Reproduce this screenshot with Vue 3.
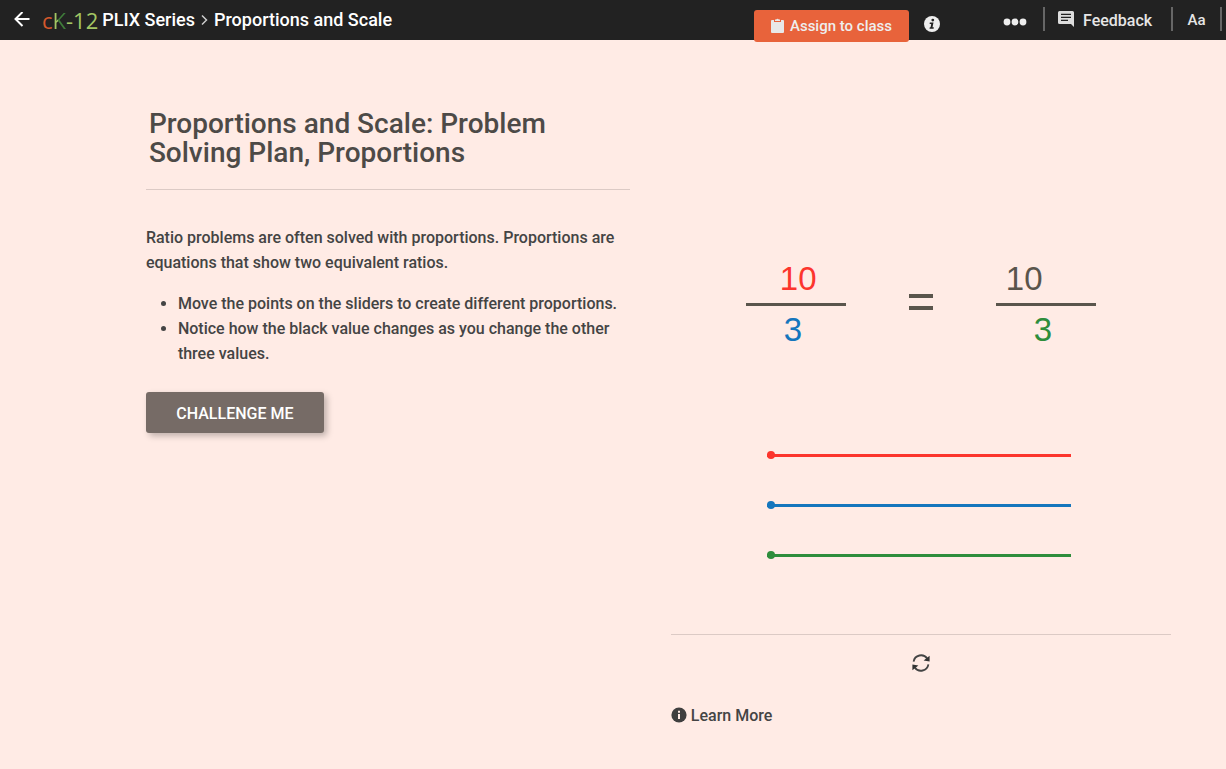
<script setup>
import { computed, ref } from 'vue';

const first = ref(10);
const second = ref(3);
const third = ref(3);

const result = computed(() => {
    const value = (first.value * third.value) / second.value;
    return Math.round(value * 100) / 100;
});

const reset = () => {
    first.value = 10;
    second.value = 3;
    third.value = 3;
};
</script>

<template>
    <div class="page">
        <header class="topbar">
            <button class="icon-btn back" aria-label="Back">
                <svg width="16" height="16" viewBox="0 0 16 16" fill="none" stroke="#fff" stroke-width="2">
                    <path d="M15.5 7H1.5M8.5 0L1.5 7l7 7" />
                </svg>
            </button>
            <a href="#" class="logo"><span class="c">c</span><span class="k">K</span>-12</a>
            <nav class="crumbs">
                <a href="#">PLIX Series</a>
                <svg width="7" height="12" viewBox="0 0 7 12" fill="none" stroke="#ccc" stroke-width="1.5">
                    <path d="M1 1.5L5.5 6 1 10.5" />
                </svg>
                <a href="#">Proportions and Scale</a>
            </nav>
            <button class="assign">
                <svg width="13" height="17" viewBox="0 0 13 17" fill="#e8e8e8">
                    <path d="M1 2h2v2h7V2h2q1 0 1 1v11q0 1-1 1H1q-1 0-1-1V3q0-1 1-1z" />
                    <path d="M4 3V1.6h1.2a1.4 1.4 0 0 1 2.6 0H9V3z" />
                </svg>
                <span>Assign to class</span>
            </button>
            <button class="icon-btn info" aria-label="Information">
                <svg width="16" height="16" viewBox="0 0 16 16">
                    <circle cx="8" cy="8" r="8" fill="#eee" />
                    <circle cx="8.8" cy="4.1" r="1.4" fill="#222" />
                    <path d="M5.8 6.6h3.7l-1 4.7h1.3l-.2 1.4H5.5l.3-1.4h.8l.6-3.3H5.6z" fill="#222" />
                </svg>
            </button>
            <button class="icon-btn more" aria-label="More options">
                <svg width="24" height="8" viewBox="0 0 24 8" fill="#eee">
                    <circle cx="4" cy="4" r="3.4" />
                    <circle cx="12" cy="4" r="3.4" />
                    <circle cx="20" cy="4" r="3.4" />
                </svg>
            </button>
            <button class="tool feedback">
                <svg width="16" height="16" viewBox="0 0 16 16">
                    <path d="M1.5 0h13Q16 0 16 1.5V16l-3-3H1.5Q0 13 0 11.5v-10Q0 0 1.5 0z" fill="#ddd" />
                    <path d="M3 3.4h10M3 6.4h10M3 9.4h7" stroke="#222" stroke-width="1.4" />
                </svg>
                <span>Feedback</span>
            </button>
            <button class="tool text-size"><span>Aa</span></button>
        </header>

        <main class="content">
            <section class="intro">
                <h1>Proportions and Scale: Problem Solving Plan, Proportions</h1>
                <p>Ratio problems are often solved with proportions. Proportions are equations that show two equivalent ratios.</p>
                <ul>
                    <li>Move the points on the sliders to create different proportions.</li>
                    <li>Notice how the black value changes as you change the other three values.</li>
                </ul>
                <button class="challenge">CHALLENGE ME</button>
            </section>

            <section class="plix">
                <div class="equation">
                    <div class="fraction">
                        <span class="red">{{ first }}</span>
                        <span class="bar"></span>
                        <span class="blue">{{ second }}</span>
                    </div>
                    <svg class="equals" width="24" height="16" viewBox="0 0 24 16" fill="#5a554c">
                        <path d="M0 0h24v4H0zM0 12h24v4H0z" />
                    </svg>
                    <div class="fraction">
                        <span class="result">{{ result }}</span>
                        <span class="bar"></span>
                        <span class="green">{{ third }}</span>
                    </div>
                </div>

                <div class="sliders">
                    <input v-model.number="first" class="red" type="range" min="10" max="40" aria-label="Left numerator">
                    <input v-model.number="second" class="blue" type="range" min="3" max="33" aria-label="Left denominator">
                    <input v-model.number="third" class="green" type="range" min="3" max="33" aria-label="Right denominator">
                </div>

                <div class="reset-row">
                    <button class="icon-btn" aria-label="Reset" @click="reset">
                        <svg width="18" height="18" viewBox="0 0 18 18">
                            <path d="M1.6 7.6a7.5 7.5 0 0 1 13.6-3M16.4 10.4a7.5 7.5 0 0 1-13.6 3" fill="none" stroke="#444" stroke-width="1.8" />
                            <path d="M17.6 1.8v5.8l-6-1.2zM.4 16.2v-5.8l6 1.2z" fill="#333" />
                        </svg>
                    </button>
                </div>

                <a href="#" class="learn">
                    <svg width="16" height="18" viewBox="0 0 16 18">
                        <circle cx="8" cy="8" r="7.6" fill="#3f3f3f" />
                        <path d="M7 3.8h2v2H7zM7 7h2v5H7z" fill="#ffebe5" />
                    </svg>
                    <span>Learn More</span>
                </a>
            </section>
        </main>
    </div>
</template>

<style>
body {
    background: #ffebe5;
}
</style>

<style scoped>
.page {
    min-height: 100vh;
    background: #ffebe5;
    color: #444;
    font-family: Roboto, sans-serif;
    font-size: 16px;
    font-weight: 500;
}

a {
    color: inherit;
    text-decoration: none;
}

button {
    border: none;
    padding: 0;
    background: none;
    color: inherit;
    font: inherit;
    cursor: pointer;
}

svg {
    display: block;
    flex: none;
}

.topbar {
    display: flex;
    align-items: center;
    height: 40px;
    padding-left: 14px;
    background: #222;
    color: #fff;
    white-space: nowrap;
}

.logo {
    margin-left: 12px;
    color: #a3c664;
    font-family: "Open Sans", sans-serif;
    font-size: 22px;
    font-weight: 400;
    line-height: 38px;
}

.logo .c {
    color: #d5582c;
}

.logo .k {
    background: linear-gradient(to right, #a3c664 5px, #3f7d3a 5px);
    background-clip: text;
    color: transparent;
}

.crumbs {
    display: flex;
    align-items: center;
    gap: 6px;
    margin-left: 4px;
    font-size: 18px;
    line-height: 40px;
}

.assign {
    display: flex;
    align-items: center;
    justify-content: center;
    gap: 6px;
    align-self: flex-start;
    flex: none;
    width: 155px;
    height: 32px;
    margin-top: 10px;
    margin-left: auto;
    border-radius: 3px;
    background: #e8633b;
    color: #eee;
    font-size: 15px;
}

.info {
    margin: 8px 0 0 15px;
}

.more {
    margin: 4px 16px 0 63px;
}

.tool {
    display: flex;
    align-items: center;
    height: 24px;
    margin-bottom: 2px;
    color: #e6e6e6;
}

.tool span {
    padding-top: 2px;
}

.feedback {
    gap: 9px;
    width: 128px;
    padding-left: 13px;
    border-left: 2px solid #666;
}

.text-size {
    justify-content: center;
    width: 51px;
    margin-right: 4px;
    border: solid #666;
    border-width: 0 2px;
    font-size: 15px;
}

.content {
    display: grid;
    grid-template-columns: 484fr 500fr;
    gap: 41px;
    padding: 0 4.5% 0 11.9%;
}

.intro {
    padding-top: 69px;
}

h1 {
    margin: 0 0 35px;
    padding: 0 3px 22px;
    border-bottom: 1px solid #dccac5;
    color: #4d4a47;
    font-size: 28px;
    font-weight: 500;
    line-height: 29px;
}

p,
ul {
    margin: 0 0 16px;
    line-height: 25px;
}

ul {
    margin-bottom: 26px;
    padding-left: 32px;
}

.challenge {
    width: 178px;
    height: 41px;
    padding-top: 2px;
    border-radius: 3px;
    background: #766b66;
    box-shadow: 3px 3px 6px rgba(0, 0, 0, 0.25);
    color: #fff;
}

.plix {
    padding-top: 215px;
}

.red {
    color: #fc352d;
}

.blue {
    color: #1576bd;
}

.green {
    color: #2e8d3c;
}

.equation {
    display: flex;
    align-items: center;
    justify-content: space-between;
    padding: 0 15%;
    color: #5a554c;
    font-family: "Liberation Sans", sans-serif;
    font-size: 33px;
    font-weight: 400;
    line-height: 48px;
}

.equals {
    margin-bottom: 6px;
}

.fraction {
    display: flex;
    flex-direction: column;
    width: 100px;
}

.fraction .red {
    padding-left: 34px;
}

.fraction .blue,
.fraction .green {
    padding-left: 38px;
}

.fraction .result {
    padding-left: 10px;
}

.bar {
    height: 3px;
    background: #5a554c;
}

.sliders {
    display: flex;
    flex-direction: column;
    gap: 30px;
    margin: 91px 20% 69px 96px;
}

input {
    appearance: none;
    width: 100%;
    height: 20px;
    margin: 0;
    background: linear-gradient(currentColor, currentColor) center / 100% 3px no-repeat;
    cursor: pointer;
}

input::-webkit-slider-thumb {
    appearance: none;
    width: 8px;
    height: 8px;
    border-radius: 50%;
    background: currentColor;
}

.reset-row {
    display: flex;
    justify-content: center;
    padding-top: 19px;
    border-top: 1px solid #dccac5;
}

.learn {
    display: inline-flex;
    align-items: center;
    gap: 4px;
    margin-top: 34px;
}
</style>
